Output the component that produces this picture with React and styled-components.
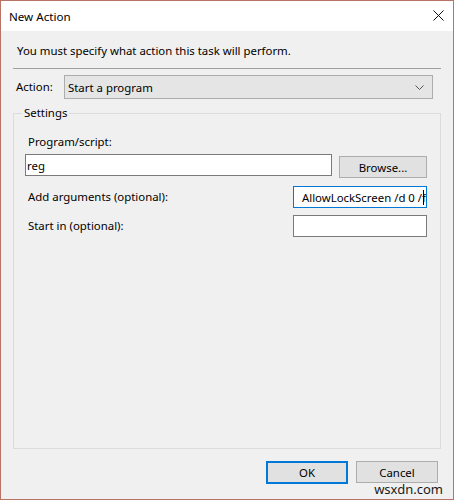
import styled, { createGlobalStyle } from "styled-components";

const Global = createGlobalStyle`
  html, body {
    margin: 0;
    padding: 0;
    background: #f0f0f0;
  }
  * {
    box-sizing: border-box;
  }
`;

export default function App() {
  return (
    <>
      <Global />
      <Window>
        <TitleBar>
          <Title>New Action</Title>
          <CloseButton aria-label="Close">
            <svg width="11" height="11" viewBox="0 0 11 11">
              <path d="M0.5 0.5 L10.5 10.5 M10.5 0.5 L0.5 10.5" stroke="#111" strokeWidth="1" fill="none" />
            </svg>
          </CloseButton>
        </TitleBar>
        <Body>
          <Prompt>You must specify what action this task will perform.</Prompt>
          <Divider />
          <ActionRow>
            <Label>Action:</Label>
            <Combo>
              <span>Start a program</span>
              <svg width="9" height="5" viewBox="0 0 9 5">
                <path d="M0.5 0.5 L4.5 4.5 L8.5 0.5" stroke="#555" strokeWidth="1" fill="none" />
              </svg>
            </Combo>
          </ActionRow>
          <GroupBox>
            <Legend>Settings</Legend>
            <Label $indent>Program/script:</Label>
            <ProgramRow>
              <TextBox $width={307}>reg</TextBox>
              <Button $width={88}>Browse...</Button>
            </ProgramRow>
            <FieldRow $top={8}>
              <Label $indent>Add arguments (optional):</Label>
              <TextBox $width={134} $focused $alignEnd>
                <span>AllowLockScreen /d 0 /f</span>
                <Caret />
              </TextBox>
            </FieldRow>
            <FieldRow $top={7}>
              <Label $indent>Start in (optional):</Label>
              <TextBox $width={134} />
            </FieldRow>
          </GroupBox>
          <Footer>
            <Button $width={82} $default>OK</Button>
            <Button $width={82}>Cancel</Button>
          </Footer>
        </Body>
        <Watermark>wsxdn.com</Watermark>
      </Window>
    </>
  );
}

const Window = styled.div`
  position: relative;
  width: 454px;
  height: 500px;
  border: 1px solid #b87266;
  background: #f0f0f0;
  display: flex;
  flex-direction: column;
  font-family: "Noto Sans", "Open Sans", sans-serif;
  font-size: 11.4px;
  color: #000;
  overflow: hidden;
`;

const TitleBar = styled.div`
  height: 30px;
  flex: none;
  background: #fff;
  display: flex;
  align-items: center;
  justify-content: space-between;
  padding: 0 9px 0 8px;
`;

const Title = styled.div`
  font-size: 11.6px;
  color: #000;
`;

const CloseButton = styled.div`
  display: flex;
  align-items: center;
  margin-top: -1px;
`;

const Body = styled.div`
  flex: 1;
  display: flex;
  flex-direction: column;
  padding: 0 12px 0 12px;
`;

const Prompt = styled.div`
  height: 16px;
  line-height: 16px;
  margin: 12px 0 0 4px;
`;

const Divider = styled.div`
  height: 1px;
  background: #a0a0a0;
  margin-top: 9px;
`;

const ActionRow = styled.div`
  display: flex;
  align-items: center;
  margin-top: 6px;
  padding-left: 3px;
`;

const Label = styled.div`
  line-height: 16px;
  white-space: nowrap;
  margin-left: ${(p) => (p.$indent ? "3px" : "0")};
  flex: ${(p) => (p.$indent ? "1" : "none")};
  width: ${(p) => (p.$indent ? "auto" : "48px")};
`;

const Combo = styled.div`
  width: 369px;
  height: 24px;
  border: 1px solid #adadad;
  background: #e5e5e5;
  display: flex;
  align-items: center;
  justify-content: space-between;
  padding: 0 8px 0 3px;
`;

const GroupBox = styled.fieldset`
  margin: 6px 0 0 0;
  height: 344px;
  border: 1px solid #dcdcdc;
  padding: 13px 13px 0 11px;
  min-width: 0;
`;

const Legend = styled.legend`
  padding: 0 2px;
  margin-left: -3px;
  line-height: 16px;
`;

const ProgramRow = styled.div`
  display: flex;
  align-items: flex-start;
  gap: 7px;
  margin-top: 4px;
`;

const FieldRow = styled.div`
  display: flex;
  align-items: center;
  margin-top: ${(p) => p.$top}px;
`;

const TextBox = styled.div`
  width: ${(p) => p.$width}px;
  height: 22px;
  flex: none;
  background: #fff;
  border: 1px solid ${(p) => (p.$focused ? "#0078d7" : "#7a7a7a")};
  display: flex;
  align-items: center;
  justify-content: ${(p) => (p.$alignEnd ? "flex-end" : "flex-start")};
  padding: 0 1px;
  overflow: hidden;
  white-space: nowrap;
`;

const Caret = styled.span`
  display: inline-block;
  flex: none;
  width: 1px;
  height: 15px;
  background: #000;
  margin-left: -3px;
  margin-right: 1px;
`;

const Button = styled.div`
  width: ${(p) => p.$width}px;
  height: ${(p) => (p.$default ? 23 : 22)}px;
  flex: none;
  display: flex;
  align-items: center;
  justify-content: center;
  background: #e1e1e1;
  border: ${(p) => (p.$default ? "2px solid #0078d7" : "1px solid #adadad")};
  margin-top: 2px;
`;

const Footer = styled.div`
  display: flex;
  justify-content: flex-end;
  gap: 8px;
  margin-top: 10px;
  padding-right: 3px;
`;

const Watermark = styled.div`
  position: absolute;
  right: 10px;
  bottom: 1px;
  font-size: 13px;
  color: #1a1a1a;
`;
